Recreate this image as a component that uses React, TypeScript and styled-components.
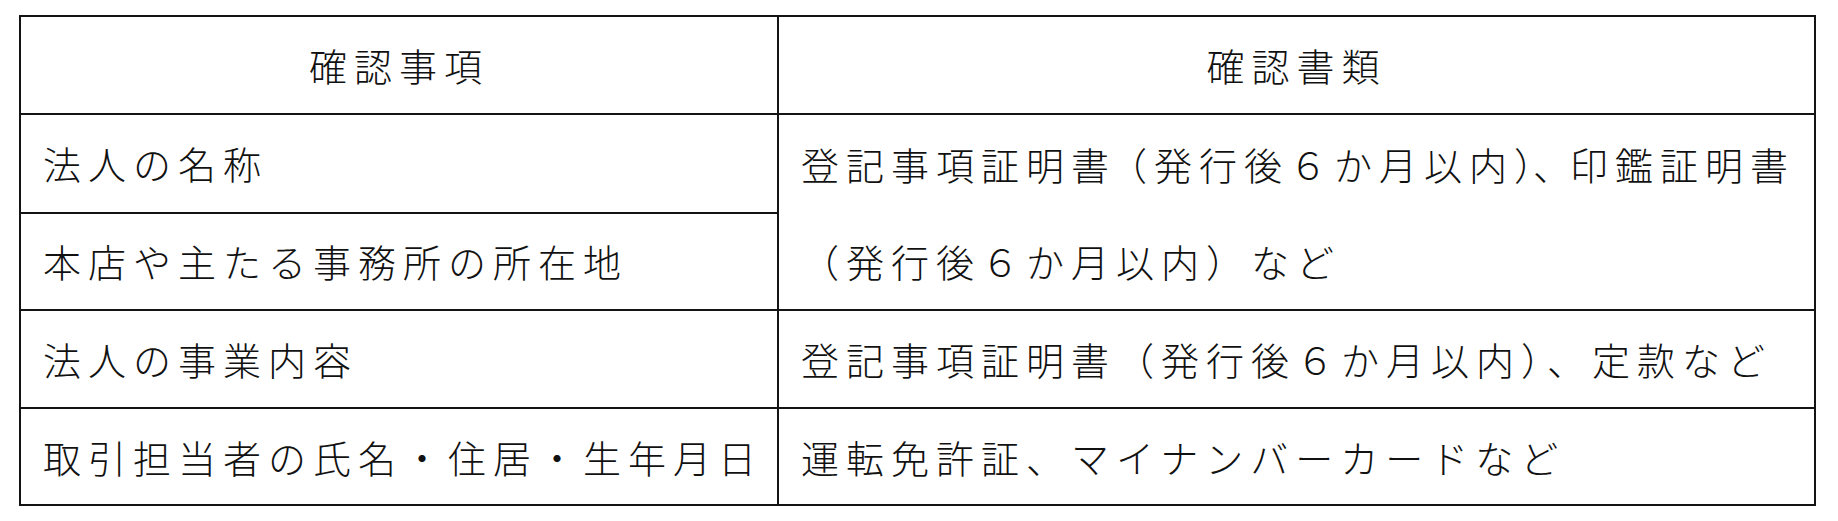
import React from "react";
import styled, { createGlobalStyle } from "styled-components";

const GlobalStyle = createGlobalStyle`
  html, body {
    margin: 0;
    padding: 0;
    background: #ffffff;
  }
  body {
    font-family: "Noto Sans CJK JP", "Noto Sans CJK SC", sans-serif;
    color: #111111;
  }
`;

const Page = styled.div`
  padding: 15px 0 0 19px;
`;

const Table = styled.table`
  border-collapse: collapse;
  width: 1795px;
  table-layout: fixed;
  font-family: "Noto Sans CJK JP", "Noto Sans CJK SC", sans-serif;
  font-weight: 300;
  font-size: 38px;
  letter-spacing: 7px;
  color: #111111;
`;

const Row = styled.tr<{ $h: number }>`
  height: ${(p) => p.$h}px;
`;

const HeadCell = styled.th`
  border: 2px solid #141414;
  font-weight: 300;
  text-align: center;
  vertical-align: middle;
  padding: 0;
  line-height: 48px;
  white-space: nowrap;
`;

const Cell = styled.td`
  border: 2px solid #141414;
  text-align: left;
  vertical-align: middle;
  padding: 0 0 0 22px;
  line-height: 48px;
  white-space: nowrap;
`;

const MergedCell = styled(Cell)`
  line-height: 97px;
`;

const Tight = styled.span<{ $ls: number }>`
  letter-spacing: ${(p) => p.$ls}px;
`;

export default function App() {
  return (
    <>
      <GlobalStyle />
      <Page>
        <Table>
          <colgroup>
            <col style={{ width: 758 }} />
            <col style={{ width: 1037 }} />
          </colgroup>
          <thead>
            <Row $h={98}>
              <HeadCell>確認事項</HeadCell>
              <HeadCell>確認書類</HeadCell>
            </Row>
          </thead>
          <tbody>
            <Row $h={98}>
              <Cell>法人の名称</Cell>
              <MergedCell rowSpan={2}>
                登記事項証明<Tight $ls={0}>書</Tight>（発行後６か月以内<Tight $ls={0}>）</Tight><Tight $ls={-1}>、</Tight>印鑑証明書
                <br />
                （発行後６か月以内）など
              </MergedCell>
            </Row>
            <Row $h={97}>
              <Cell>本店や主たる事務所の所在地</Cell>
            </Row>
            <Row $h={98}>
              <Cell>法人の事業内容</Cell>
              <Cell>登記事項証明書（発行後６か月以内）、定款など</Cell>
            </Row>
            <Row $h={97}>
              <Cell>取引担当者の氏名・住居・生年月日</Cell>
              <Cell>運転免許証、マイナンバーカードなど</Cell>
            </Row>
          </tbody>
        </Table>
      </Page>
    </>
  );
}
